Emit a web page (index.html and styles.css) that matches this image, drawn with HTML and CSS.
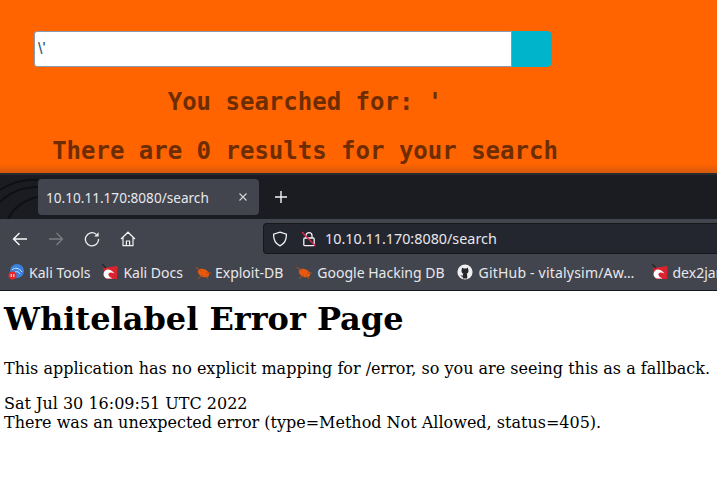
FILE: index.html
```html
<!DOCTYPE html>
<html>
<head>
    <title>Whitelabel Error Page</title>
    <link rel="stylesheet" href="styles.css">
</head>
<body>
    <section class="search-page">
        <form class="search-form">
            <input class="search-input" type="text" value="\'">
            <button class="search-button" type="button"></button>
        </form>
        <h2 class="result-line searched">You searched for: '</h2>
        <h2 class="result-line">There are 0 results for your search</h2>
    </section>

    <section class="browser">
        <div class="tab-strip">
            <svg class="swirl" width="38" height="46" viewBox="0 0 38 46" fill="none" stroke="#0f1013" stroke-width="2">
                <path d="M0 17C12 9 24 6 38 7"/>
                <path d="M0 29C10 19 22 14 38 14"/>
                <path d="M8 46C14 34 24 27 38 24"/>
            </svg>
            <div class="tab">
                <span class="tab-title">10.10.11.170:8080/search</span>
                <svg class="tab-close" width="10" height="10" viewBox="0 0 10 10" stroke="#d5d6da" stroke-width="1.1">
                    <path d="M1.5 1.5L8.5 8.5M8.5 1.5L1.5 8.5"/>
                </svg>
            </div>
            <svg class="new-tab" width="14" height="14" viewBox="0 0 14 14" stroke="#f4f4f5" stroke-width="1.4">
                <path d="M7 1V13M1 7H13"/>
            </svg>
        </div>

        <div class="nav-bar">
            <svg class="nav-icon" width="16" height="16" viewBox="0 0 16 16" fill="none" stroke="#f7f7f9" stroke-width="1.4">
                <path d="M15 8H1.5M7.5 2L1.5 8L7.5 14"/>
            </svg>
            <svg class="nav-icon" width="16" height="16" viewBox="0 0 16 16" fill="none" stroke="#7c7e84" stroke-width="1.3">
                <path d="M1 8H14.5M8.5 2L14.5 8L8.5 14"/>
            </svg>
            <svg class="nav-icon" width="16" height="16" viewBox="0 0 16 16" fill="none" stroke="#f2f2f4" stroke-width="1.3">
                <path d="M12.2 3.2A6.6 6.6 0 1 0 14.6 8"/>
                <path d="M14.6 1.2V5.6H10.2Z" fill="#f2f2f4" stroke="none"/>
            </svg>
            <svg class="nav-icon" width="16" height="16" viewBox="0 0 16 16" fill="none" stroke="#f2f2f4" stroke-width="1.2">
                <path d="M1 8L8 1.2L15 8M3 6.5V14.6H13V6.5M6.4 14.6V10H9.6V14.6"/>
            </svg>
            <div class="url-bar">
                <svg width="16" height="16" viewBox="0 0 16 16" fill="none" stroke="#f2f2f4" stroke-width="1.3">
                    <path d="M8 1.2L14.4 3.2C14.6 9 12.4 12.8 8 14.8C3.6 12.8 1.4 9 1.6 3.2Z"/>
                </svg>
                <svg class="lock" width="16" height="16" viewBox="0 0 16 16" fill="none" stroke="#f2f2f4" stroke-width="1.3">
                    <path d="M5 7V4.6A3 3 0 0 1 11 4.6V7"/>
                    <rect x="2.8" y="7" width="10.4" height="7.6" rx="1.2"/>
                    <path d="M1 1L14.5 15" stroke="#e22850"/>
                </svg>
                <span class="url-text">10.10.11.170:8080/search</span>
            </div>
        </div>

        <div class="bookmarks">
            <a class="bookmark">
                <svg width="16" height="16" viewBox="0 0 16 16">
                    <circle cx="9" cy="7" r="7" fill="#3b82e0"/>
                    <path d="M4 6C7 3 11 4 14 8M7 8C9 7 11 8 12 10" fill="none" stroke="#cfe2fa" stroke-width="1"/>
                    <circle cx="4.5" cy="11.5" r="4" fill="#e5262b"/>
                    <path d="M3.2 10V13M5.8 10V13" stroke="#fff" stroke-width="1"/>
                </svg>
                Kali Tools
            </a>
            <a class="bookmark">
                <svg width="16" height="16" viewBox="0 0 16 16">
                    <path d="M1 4L15.5 2L15 15H4Z" fill="#d9232e"/>
                    <path d="M1.5 10C2 5 8 3.5 12.5 9.5C8.5 7.5 6 8.5 6.5 11C7 13 9 13.5 10.5 14.5H5C3 14 1.5 12.5 1.5 10Z" fill="#fff"/>
                    <path d="M0 0L4 4" stroke="#222" stroke-width="1.2"/>
                </svg>
                Kali Docs
            </a>
            <a class="bookmark bookmark-exploit">
                <svg width="16" height="16" viewBox="0 0 16 16">
                    <ellipse cx="8.5" cy="9" rx="6" ry="3.8" transform="rotate(25 8.5 9)" fill="#e8590f"/>
                    <path d="M0.5 3L6 7M3 14.5L8 11M13 15L10 11M16 9H11" stroke="#b8500f" stroke-width="1"/>
                </svg>
                Exploit-DB
            </a>
            <a class="bookmark">
                <svg width="16" height="16" viewBox="0 0 16 16">
                    <ellipse cx="8.5" cy="9" rx="6" ry="3.8" transform="rotate(25 8.5 9)" fill="#e8590f"/>
                    <path d="M0.5 3L6 7M3 14.5L8 11M13 15L10 11M16 9H11" stroke="#b8500f" stroke-width="1"/>
                </svg>
                Google Hacking DB
            </a>
            <a class="bookmark bookmark-long">
                <svg width="16" height="16" viewBox="0 0 16 16">
                    <circle cx="8" cy="8" r="7.6" fill="#f0f0f2"/>
                    <path d="M5.2 3.4L6.6 4.5H9.4L10.8 3.4L11.3 5.6C12 7.6 11 9.4 9.6 9.8C10.1 10.3 10.2 11 10.2 11.6V14.4H5.8V12.6C4.5 12.9 3.8 12.3 3.3 11.2C4.2 11.4 4.8 12 5.8 11.6C5.8 10.8 6 10.3 6.4 9.8C5 9.4 4 7.6 4.7 5.6Z" fill="#26272b"/>
                </svg>
                GitHub - vitalysim/Aw…
            </a>
            <a class="bookmark">
                <svg width="16" height="16" viewBox="0 0 16 16">
                    <path d="M1 4L15.5 2L15 15H4Z" fill="#d9232e"/>
                    <path d="M1.5 10C2 5 8 3.5 12.5 9.5C8.5 7.5 6 8.5 6.5 11C7 13 9 13.5 10.5 14.5H5C3 14 1.5 12.5 1.5 10Z" fill="#fff"/>
                    <path d="M0 0L4 4" stroke="#222" stroke-width="1.2"/>
                </svg>
                dex2jar
            </a>
        </div>
    </section>

    <section class="error-page">
        <h1>Whitelabel Error Page</h1>
        <p>This application has no explicit mapping for /error, so you are seeing this as a fallback.</p>
        <div>Sat Jul 30 16:09:51 UTC 2022</div>
        <div>There was an unexpected error (type=Method Not Allowed, status=405).</div>
    </section>
</body>
</html>
```

FILE: styles.css
```css
html, body {
    margin: 0;
    height: 100%;
    overflow: hidden;
}
body {
    background-color: #fff;
    width: 717px;
}

/* orange search page */
.search-page {
    height: 173px;
    box-sizing: border-box;
    padding: 31px 0 0 34px;
    background: linear-gradient(to bottom, #ff6400 0, #ff6400 164px, #d4590e 173px);
}
.search-form {
    display: flex;
    width: 518px;
    height: 36px;
}
.search-input {
    flex: 1;
    min-width: 0;
    box-sizing: border-box;
    height: 36px;
    margin: 0;
    padding: 0 3px;
    border: 1.5px solid #8a9bb0;
    border-radius: 3px 0 0 3px;
    background: #fff;
    color: #2e4a68;
    font-family: "Liberation Sans", sans-serif;
    font-size: 16px;
    outline: none;
}
.search-button {
    width: 40px;
    height: 36px;
    padding: 0;
    border: none;
    border-radius: 0 5px 5px 0;
    background-color: #00b4cc;
}
.result-line {
    width: 542px;
    margin: 0;
    color: #6e2d00;
    font-family: "DejaVu Sans Mono", monospace;
    font-size: 24px;
    font-weight: bold;
    line-height: 28px;
    text-align: center;
    white-space: nowrap;
}
.searched {
    margin-top: 21px;
    margin-bottom: 21px;
}

/* browser chrome */
.browser {
    font-family: "Noto Sans", sans-serif;
    font-size: 14px;
    color: #e8e8ec;
}
.tab-strip {
    display: flex;
    align-items: center;
    height: 46px;
    background-color: #1b1c21;
    border-top: 2px solid #2a2b30;
    box-sizing: border-box;
}
.swirl {
    flex: none;
    margin-top: -2px;
}
.tab {
    display: flex;
    align-items: center;
    justify-content: space-between;
    flex: none;
    box-sizing: border-box;
    width: 221px;
    height: 36px;
    padding: 0 11px 0 8px;
    border-radius: 4px;
    background-color: #42454d;
    font-size: 13.6px;
}
.new-tab {
    margin-left: 15px;
}
.nav-bar {
    display: flex;
    align-items: center;
    box-sizing: border-box;
    height: 35px;
    padding: 4px 0 0 12px;
    background-color: #42454d;
}
.nav-icon {
    flex: none;
    margin-right: 20px;
}
.url-bar {
    display: flex;
    align-items: center;
    flex: 1;
    box-sizing: border-box;
    height: 31px;
    margin-left: 107px;
    padding-left: 8px;
    border: 1px solid #17181c;
    border-right: none;
    border-radius: 4px 0 0 4px;
    background-color: #24262f;
    font-size: 14.35px;
}
.lock {
    margin-left: 13px;
}
.url-text {
    margin-left: 8px;
}
.bookmarks {
    display: flex;
    align-items: center;
    gap: 12px;
    box-sizing: border-box;
    height: 37px;
    padding-left: 8px;
    background-color: #42454d;
    border-bottom: 1px solid #17181c;
    overflow: hidden;
}
.bookmark {
    display: flex;
    align-items: center;
    flex: none;
    gap: 5px;
    white-space: nowrap;
}
.bookmark-exploit {
    gap: 4px;
    margin-right: 1px;
}
.bookmark-long {
    gap: 6px;
    width: 183px;
    letter-spacing: 0.2px;
}

/* spring error page */
.error-page {
    padding: 0 4px;
    color: #000;
    font-family: "DejaVu Serif", serif;
    font-size: 16px;
    line-height: 19px;
    white-space: nowrap;
}
.error-page h1 {
    margin: 9px 0 21px;
    font-size: 32px;
    line-height: 38px;
}
.error-page p {
    margin: 0 0 16px;
}
```
